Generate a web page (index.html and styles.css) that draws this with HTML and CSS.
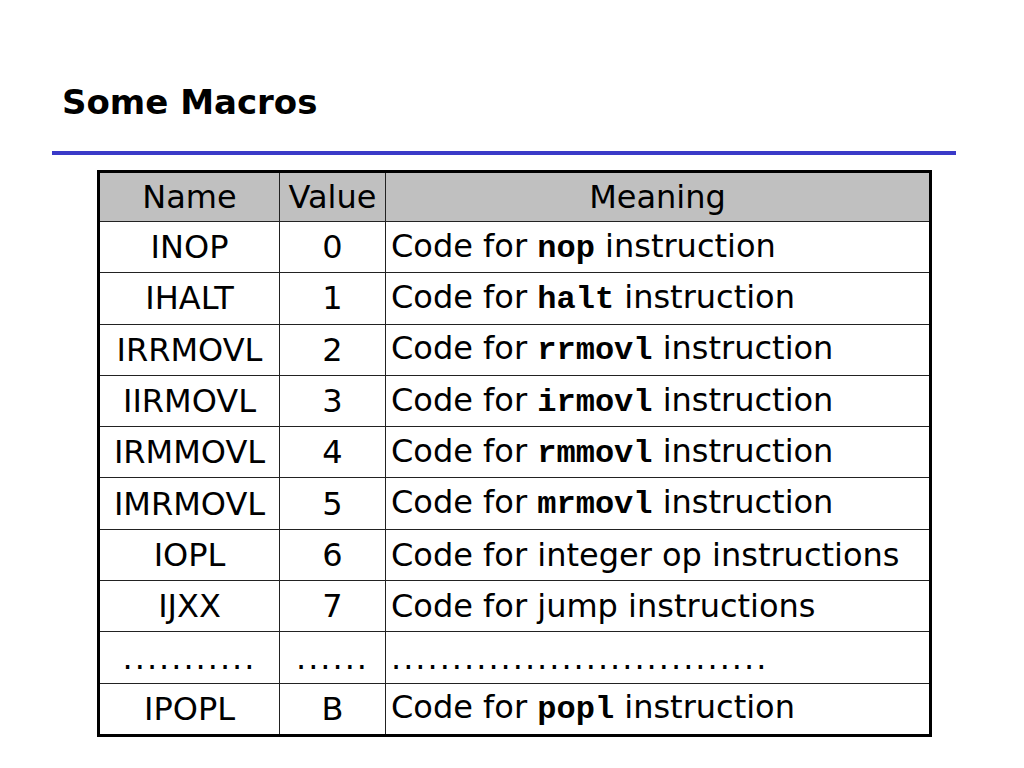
FILE: index.html
```html
<!DOCTYPE html>
<html>
<head>
<meta charset="utf-8">
<link rel="stylesheet" href="styles.css">
</head>
<body>
<div class="slide">
  <h1 class="title">Some Macros</h1>
  <div class="rule"></div>
  <table class="macros">
    <colgroup><col class="c-name"><col class="c-val"><col class="c-mean"></colgroup>
    <tr class="head"><th>Name</th><th>Value</th><th>Meaning</th></tr>
    <tr><td>INOP</td><td>0</td><td class="m">Code for <code>nop</code> instruction</td></tr>
    <tr><td>IHALT</td><td>1</td><td class="m">Code for <code>halt</code> instruction</td></tr>
    <tr><td>IRRMOVL</td><td>2</td><td class="m">Code for <code>rrmovl</code> instruction</td></tr>
    <tr><td>IIRMOVL</td><td>3</td><td class="m">Code for <code>irmovl</code> instruction</td></tr>
    <tr><td>IRMMOVL</td><td>4</td><td class="m">Code for <code>rmmovl</code> instruction</td></tr>
    <tr><td>IMRMOVL</td><td>5</td><td class="m">Code for <code>mrmovl</code> instruction</td></tr>
    <tr><td>IOPL</td><td>6</td><td class="m">Code for integer op instructions</td></tr>
    <tr><td>IJXX</td><td>7</td><td class="m">Code for jump instructions</td></tr>
    <tr class="dots"><td>...........</td><td>......</td><td class="m">...............................</td></tr>
    <tr><td>IPOPL</td><td>B</td><td class="m">Code for <code>popl</code> instruction</td></tr>
  </table>
</div>
</body>
</html>
```
FILE: styles.css
```css
html, body {
  margin: 0;
  padding: 0;
  background: #ffffff;
}
.slide {
  width: 1024px;
  height: 768px;
  position: relative;
  font-family: "DejaVu Sans", "Liberation Sans", sans-serif;
  color: #000;
  padding-top: 80px;
  box-sizing: border-box;
}
.title {
  margin: 0 0 0 62px;
  font-size: 34px;
  font-weight: bold;
  line-height: 44px;
  height: 44px;
}
.rule {
  margin: 27px 0 0 52px;
  width: 904px;
  height: 4px;
  background: #3a3ac8;
}
.macros {
  margin: 15px 0 0 97px;
  border-collapse: collapse;
  border: 3px solid #000;
  width: 835px;
  font-size: 32px;
}
.c-name { width: 181px; }
.c-val { width: 106px; }
.macros th, .macros td {
  border: 1.5px solid #222;
  height: 50.3px;
  padding: 0 2px;
  text-align: center;
  font-weight: normal;
  white-space: nowrap;
  line-height: 36px;
}
.macros .head th {
  height: 48px;
  background: #c0c0c0;
}
.macros td.m {
  text-align: left;
  padding-left: 5px;
}
.macros code {
  font-family: "Liberation Mono", "Courier New", monospace;
  font-weight: bold;
  font-size: 32px;
}
.macros .dots td {
  height: 43.3px;
  letter-spacing: 2px;
  vertical-align: bottom;
  padding-bottom: 7px;
  line-height: 36px;
}
```
